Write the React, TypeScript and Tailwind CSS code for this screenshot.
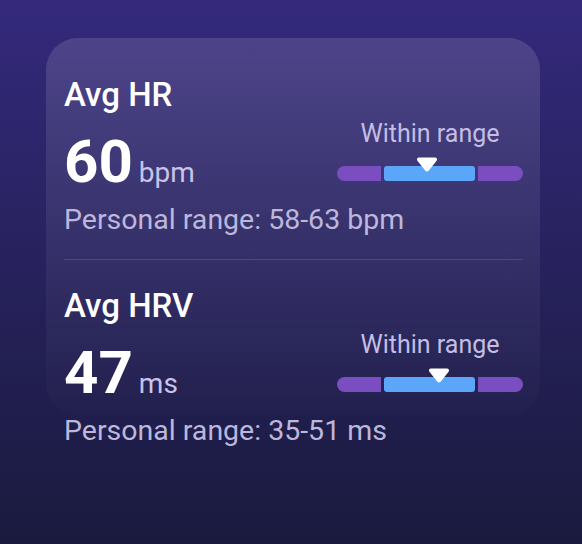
import React from "react";

type Metric = {
  label: string;
  value: string;
  unit: string;
  range: string;
  marker: number;
};

const metrics: Metric[] = [
  { label: "Avg HR", value: "60", unit: "bpm", range: "Personal range: 58-63 bpm", marker: 48.4 },
  { label: "Avg HRV", value: "47", unit: "ms", range: "Personal range: 35-51 ms", marker: 54.8 },
];

function RangeBar({ marker }: { marker: number }) {
  return (
    <div className="flex w-[186px] flex-col items-center">
      <span className="text-[25px] leading-[30px] text-[#c4bee4]">Within range</span>
      <div className="relative mt-[17px] flex h-[15px] w-full gap-[3px]">
        <div className="w-[44px] rounded-l-full rounded-r-[3px] bg-[#7a4ec0]" />
        <div className="flex-1 rounded-[3px] bg-[#5ba6f8]" />
        <div className="w-[45px] rounded-r-full rounded-l-[3px] bg-[#7a4ec0]" />
        {/* marker */}
        <svg
          className="absolute top-[-10px] -translate-x-1/2"
          style={{ left: `${marker}%` }}
          width="22"
          height="16"
          viewBox="0 0 22 16"
        >
          <path d="M3 1.5h16a2 2 0 0 1 1.6 3.2l-8 10a2 2 0 0 1-3.2 0l-8-10A2 2 0 0 1 3 1.5z" fill="#ffffff" />
        </svg>
      </div>
    </div>
  );
}

function MetricBlock({ m, top }: { m: Metric; top: string }) {
  return (
    <div className={top}>
      <div className="text-[33px] font-medium leading-[40px] text-white">{m.label}</div>
      <div className="mt-[4px] flex items-end justify-between">
        <div className="flex h-[48px] items-baseline gap-[6px]">
          <span className="text-[60px] font-bold leading-[48px] text-white">{m.value}</span>
          <span className="text-[28px] leading-[48px] text-[#c9c3ea]">{m.unit}</span>
        </div>
        <div className="mb-[5px]">
          <RangeBar marker={m.marker} />
        </div>
      </div>
      <div className="mt-[17px] text-[28.5px] leading-[34px] text-[#bdb7dc]">{m.range}</div>
    </div>
  );
}

export default function App() {
  return (
    <div
      className="h-[544px] w-[582px] overflow-hidden bg-gradient-to-b from-[#34297c] to-[#1a1a3e] pt-[38px]"
      style={{ fontFamily: "Roboto, 'Noto Sans', sans-serif" }}
    >
      <div className="ml-[46px] h-[377px] w-[494px] rounded-[32px] bg-gradient-to-b from-white/[0.13] to-white/[0.01] pl-[18px] pr-[17px]">
        <MetricBlock m={metrics[0]} top="pt-[37px]" />
        <div className="mt-[22px] h-px bg-white/[0.13]" />
        <MetricBlock m={metrics[1]} top="pt-[26px]" />
      </div>
    </div>
  );
}
